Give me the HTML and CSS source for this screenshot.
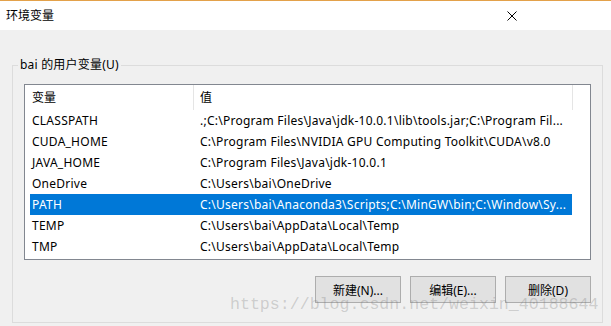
FILE: index.html
```html
<!DOCTYPE html>
<html>
<head>
	<meta charset="utf-8">
	<title>环境变量</title>
	<link rel="stylesheet" href="styles.css">
</head>
<body>
<div class="window">

<header class="titlebar">
	<span class="title">环境变量</span>
	<svg class="close" width="10" height="10" viewBox="0 0 10 10">
		<path d="M0.5 0.5 L9.5 9.5 M9.5 0.5 L0.5 9.5" stroke="#000" stroke-width="1" fill="none"/>
	</svg>
</header>

<main class="group">
	<div class="group-title">bai 的用户变量(U)</div>

	<div class="list">
		<div class="list-head">
			<span class="cell name">变量</span>
			<span class="cell value">值</span>
		</div>
		<div class="row">
			<span class="cell name">CLASSPATH</span>
			<span class="cell value">.;C:\Program Files\Java\jdk-10.0.1\lib\tools.jar;C:\Program Fil...</span>
		</div>
		<div class="row">
			<span class="cell name">CUDA_HOME</span>
			<span class="cell value">C:\Program Files\NVIDIA GPU Computing Toolkit\CUDA\v8.0</span>
		</div>
		<div class="row">
			<span class="cell name">JAVA_HOME</span>
			<span class="cell value">C:\Program Files\Java\jdk-10.0.1</span>
		</div>
		<div class="row">
			<span class="cell name">OneDrive</span>
			<span class="cell value">C:\Users\bai\OneDrive</span>
		</div>
		<div class="row selected">
			<span class="cell name">PATH</span>
			<span class="cell value">C:\Users\bai\Anaconda3\Scripts;C:\MinGW\bin;C:\Window\Sy...</span>
		</div>
		<div class="row">
			<span class="cell name">TEMP</span>
			<span class="cell value">C:\Users\bai\AppData\Local\Temp</span>
		</div>
		<div class="row">
			<span class="cell name">TMP</span>
			<span class="cell value">C:\Users\bai\AppData\Local\Temp</span>
		</div>
	</div>

	<div class="buttons">
		<button>新建(N)...</button>
		<button>编辑(E)...</button>
		<button>删除(D)</button>
	</div>
</main>

<div class="watermark">https://blog.csdn.net/weixin_40188644</div>

</div>
</body>
</html>
```

FILE: styles.css
```css
html, *, *::before,
*::after{
	box-sizing: border-box;
}
body{
	margin: 0;
	overflow: hidden;
	font-family: "Noto Sans", "Noto Sans CJK SC", sans-serif;
	font-size: 12px;
	color: #000;
}
.window{
	position: relative;
	width: 611px;
	height: 326px;
	background: #f0f0f0;
}
.titlebar{
	height: 30px;
	border-top: 1px solid #e3a14a;
	background: #fff;
	display: flex;
	align-items: center;
	justify-content: space-between;
	padding: 0 94px 0 6px;
}
.title{
	font-size: 12px;
	line-height: 16px;
}
.close{
	display: block;
	margin-top: 1px;
}
.group{
	margin: 35px 8px 0 12px;
	height: 258px;
	border: 1px solid #dcdcdc;
}
.group-title{
	width: fit-content;
	margin: -9px 0 0 5px;
	padding: 0 2px;
	line-height: 16px;
	background: #f0f0f0;
	letter-spacing: 0.2px;
}
.list{
	margin: 11px 11px 0 11px;
	height: 176px;
	border: 1px solid #828790;
	background: #fff;
	padding-left: 5px;
}
.list-head, .row{
	display: grid;
	grid-template-columns: 164px 379px;
}
.list-head{
	height: 25px;
	line-height: 25px;
}
.list-head .cell{
	border-right: 1px solid #e5e5e5;
}
.row{
	height: 21px;
	line-height: 21px;
	letter-spacing: 0.25px;
}
.cell{
	white-space: nowrap;
	overflow: hidden;
}
.name{
	padding-left: 2px;
}
.value{
	padding-left: 6px;
}
.row .value{
	margin-right: 1px;
}
.selected{
	background: #0078d7;
	color: #fff;
	width: 542px;
}
.buttons{
	display: flex;
	justify-content: flex-end;
	gap: 9px;
	margin: 16px 11px 0 0;
}
button{
	width: 86px;
	height: 27px;
	border: 1px solid #adadad;
	background: #e1e1e1;
	font-family: "Noto Sans", "Noto Sans CJK SC", sans-serif;
	font-size: 12px;
	color: #000;
	padding: 0;
}
.watermark{
	position: absolute;
	left: 230px;
	top: 295px;
	font-family: "Liberation Mono", monospace;
	font-size: 16.6px;
	color: rgba(120, 120, 120, 0.3);
	white-space: nowrap;
}
```
